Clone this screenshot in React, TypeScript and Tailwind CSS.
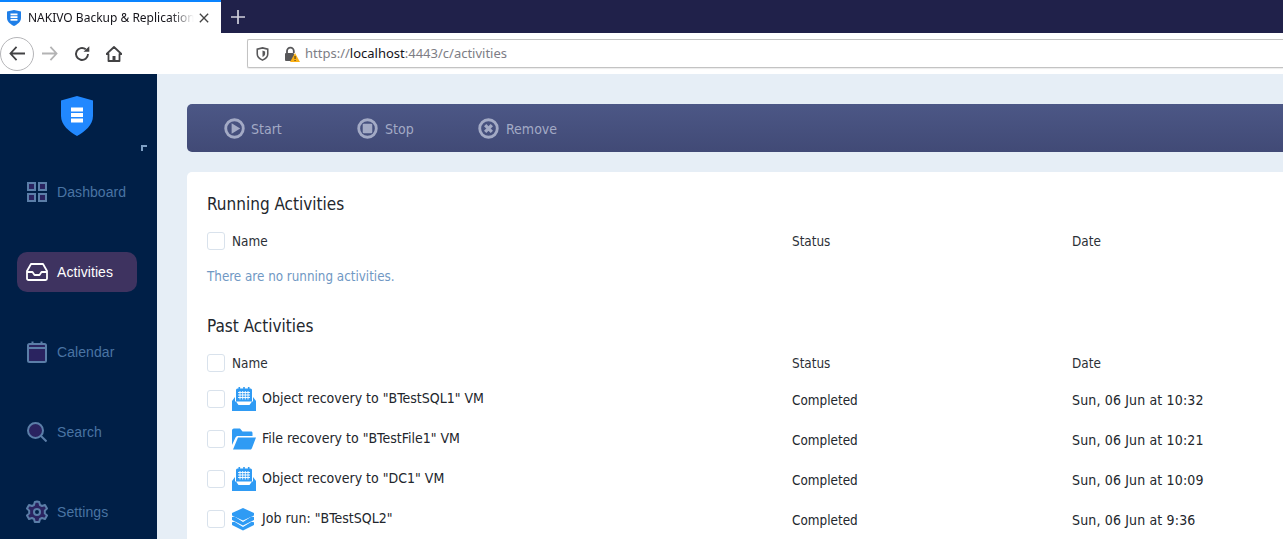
import React from "react";

function Shield({ className }: { className?: string }) {
  return (
    <svg viewBox="0 0 32 40" className={className}>
      <path d="M16 0 L32 4.5 V20 C32 29 24 35.5 16 40 C8 35.5 0 29 0 20 V4.5 Z" fill="#2188ff" />
      <rect x="10" y="11.5" width="12" height="4" fill="#fff" />
      <rect x="10" y="17" width="12" height="4" fill="#fff" />
      <rect x="10" y="22.5" width="12" height="4" fill="#fff" />
    </svg>
  );
}

function TaskIcon() {
  return (
    <svg viewBox="0 0 24 24" className="w-6 h-6 shrink-0">
      <rect x="4" y="1.5" width="16" height="15" rx="1.5" fill="#2f9bf4" />
      <rect x="6.5" y="0" width="1.6" height="3" fill="#2f9bf4" />
      <rect x="11.2" y="0" width="1.6" height="3" fill="#2f9bf4" />
      <rect x="15.9" y="0" width="1.6" height="3" fill="#2f9bf4" />
      <path d="M6 5.5h12M6 8h12M6 10.5h12M8 4v8.5M10.7 4v8.5M13.3 4v8.5M16 4v8.5" stroke="#fff" strokeWidth="0.9" fill="none" />
      <path d="M0 14 L3 10 V14.5 H21 V10 L24 14 V24 H0 Z" fill="#2f9bf4" />
      <path d="M4 14.5 H20 L17.5 18 H6.5 Z" fill="#fff" />
    </svg>
  );
}

function FolderIcon() {
  return (
    <svg viewBox="0 0 24 24" className="w-6 h-6 shrink-0">
      <path d="M0 3.5 C0 2.5 .7 1.5 2 1.5 H8 L10.5 4.5 H19 C20 4.5 20.5 5.2 20.5 6 V9 H6 C4.8 9 4 9.5 3.4 10.7 L0 18 Z" fill="#2f9bf4" />
      <path d="M6 10.5 H24 L20 21 C19.7 21.8 19.2 22.5 18.5 22.5 H1 Z" fill="#2f9bf4" />
    </svg>
  );
}

function StackIcon() {
  return (
    <svg viewBox="0 0 24 24" className="w-6 h-6 shrink-0">
      <path d="M11 1 L22 6 V8.5 L11 13.5 L0 8.5 V6 Z" fill="#2f9bf4" />
      <path d="M0 10 L2.5 9.6 L11 15 L19.5 9.6 L22 10 V13 L11 18.5 L0 13 Z" fill="#2f9bf4" />
      <path d="M0 15.2 L2.5 14.8 L11 20 L19.5 14.8 L22 15.2 V18 L11 23.5 L0 18 Z" fill="#2f9bf4" />
    </svg>
  );
}

function NavItem({ label, active, icon }: { label: string; active?: boolean; icon: React.ReactNode }) {
  return (
    <div
      className={
        active
          ? "flex items-center h-10 w-[120px] rounded-[10px] bg-[#3e3360] mx-[17px] pl-[9px] gap-[9px] text-white"
          : "flex items-center h-10 w-[120px] mx-[17px] pl-[9px] gap-[9px] text-[#4a74a3]"
      }
    >
      <span className="w-[22px] h-[22px] flex items-center justify-center shrink-0">{icon}</span>
      <span className="text-[14px] tracking-[0.08px] font-['Liberation_Sans',sans-serif]">{label}</span>
    </div>
  );
}

function ActionIcon({ kind }: { kind: "play" | "stop" | "x" }) {
  return (
    <svg viewBox="0 0 22 22" className="w-[21px] h-[21px]">
      <circle cx="11" cy="11" r="9.2" fill="none" stroke="#a3aac5" strokeWidth="3" />
      {kind === "play" && <path d="M8 5.5 L17 11 L8 16.5 Z" fill="#a3aac5" />}
      {kind === "stop" && <rect x="6" y="6" width="10" height="10" rx="1" fill="#a3aac5" />}
      {kind === "x" && <path d="M7.5 7.5 L14.5 14.5 M14.5 7.5 L7.5 14.5" stroke="#a3aac5" strokeWidth="3.4" />}
    </svg>
  );
}

function Check() {
  return <span className="block w-[18px] h-[18px] shrink-0 rounded-[3px] border border-[#d9e2ec] bg-white" />;
}

const rowCols = "grid grid-cols-[585px_280px_1fr] items-center";

function Header({ heightClass }: { heightClass: string }) {
  return (
    <div className={`${rowCols} ${heightClass} text-[13.4px] text-[#2b2f36]`}>
      <div className="flex items-center gap-[7px]">
        <Check />
        <span className="translate-y-[1px]">Name</span>
      </div>
      <span className="translate-y-[1px]">Status</span>
      <span className="translate-y-[1px]">Date</span>
    </div>
  );
}

function Row({ icon, name, date }: { icon: React.ReactNode; name: string; date: string }) {
  return (
    <div className={`${rowCols} h-10 text-[14px] text-[#22262c]`}>
      <div className="flex items-center gap-[7px] -translate-y-[1px]">
        <Check />
        {icon}
        <span className="ml-[-1px] -translate-y-[1px]">{name}</span>
      </div>
      <span className="text-[13.4px] translate-y-[1px]">Completed</span>
      <span className="tracking-[0.15px]">{date}</span>
    </div>
  );
}

export default function App() {
  return (
    <div className="w-[1283px] h-[539px] overflow-hidden flex flex-col bg-white font-['Noto_Sans',sans-serif]">
      {/* tab bar */}
      <div className="h-[33px] shrink-0 flex bg-[#20214a]">
        <div className="w-[221px] bg-white border-t-2 border-[#0a84ff] flex items-center pl-[7px] pr-[2px]">
          <svg viewBox="0 0 14 16" className="w-[14px] h-4 shrink-0">
            <path d="M7 0 L14 1.5 V8 C14 12 10 14.5 7 16 C4 14.5 0 12 0 8 V1.5 Z" fill="#1f7fe8" />
            <rect x="3.5" y="3.5" width="7" height="1.8" fill="#fff" />
            <rect x="3.5" y="6.2" width="7" height="1.8" fill="#fff" />
            <rect x="3.5" y="8.9" width="7" height="1.8" fill="#fff" />
          </svg>
          <span className="ml-[7px] text-[12px] text-[#15141a] whitespace-nowrap overflow-hidden w-[166px] [mask-image:linear-gradient(to_right,black_86%,transparent)]">
            NAKIVO Backup &amp; Replication v
          </span>
          <svg viewBox="0 0 12 12" className="w-[10px] h-[10px] ml-[5px] shrink-0">
            <path d="M1 1 L11 11 M11 1 L1 11" stroke="#444" strokeWidth="1.6" />
          </svg>
        </div>
        <div className="w-[34px] flex items-center justify-center">
          <svg viewBox="0 0 14 14" className="w-[14px] h-[14px]">
            <path d="M7 0 V14 M0 7 H14" stroke="#d0d0dc" strokeWidth="1.7" />
          </svg>
        </div>
      </div>
      {/* nav bar */}
      <div className="h-[41px] shrink-0 flex items-center bg-white">
        <div className="w-[34px] h-[34px] rounded-full border border-[#b5b5b8] flex items-center justify-center">
          <svg viewBox="0 0 18 16" className="w-[17px] h-[15px]">
            <path d="M8 1 L1.5 8 L8 15 M2 8 H17" stroke="#424244" strokeWidth="1.9" fill="none" />
          </svg>
        </div>
        <svg viewBox="0 0 18 16" className="w-[17px] h-[15px] ml-[7px]">
          <path d="M10 1 L16.5 8 L10 15 M16 8 H1" stroke="#b3b3b4" strokeWidth="1.9" fill="none" />
        </svg>
        <svg viewBox="0 0 16 16" className="w-[16px] h-[16px] ml-[16px]">
          <path d="M14 8 A6 6 0 1 1 11.8 3.3" stroke="#424244" strokeWidth="1.9" fill="none" />
          <path d="M9.5 5.8 H15.3 V0.2 Z" fill="#424244" />
        </svg>
        <svg viewBox="0 0 16 16" className="w-[16px] h-[16px] ml-[16px]">
          <path d="M8 1 L15.5 8 L13.5 8 V15 H2.5 V8 L.5 8 Z" fill="none" stroke="#424244" strokeWidth="1.8" strokeLinejoin="round" />
          <rect x="6.5" y="10" width="3" height="5" fill="#424244" />
        </svg>
        <div className="ml-[125px] flex-1 h-[29px] border border-[#c3c3c3] border-r-0 rounded-l-[2px] flex items-center pl-[8px] shadow-[0_1px_1px_rgba(0,0,0,0.08)]">
          <svg viewBox="0 0 14 16" className="w-[13px] h-[14px]">
            <path d="M7 1 L13 2.5 V8 C13 11.5 10 13.8 7 15 C4 13.8 1 11.5 1 8 V2.5 Z" fill="none" stroke="#58585a" strokeWidth="1.8" />
            <path d="M7 4 L10 5 V8 C10 9.5 8.5 11 7 11.5 Z" fill="#58585a" />
          </svg>
          <svg viewBox="0 0 16 16" className="w-4 h-4 ml-[15px]">
            <path d="M3 7 V5 A3.4 3.4 0 0 1 9.8 5 V7" fill="none" stroke="#58585a" strokeWidth="1.8" />
            <rect x="1" y="7" width="9" height="8" rx="1" fill="#58585a" />
            <path d="M11 7 L16 16 H6 Z" fill="#fbb014" />
            <rect x="10.6" y="10" width="0.9" height="3" fill="#222" />
            <rect x="10.6" y="14" width="0.9" height="1" fill="#222" />
          </svg>
          <span className="ml-[5px] text-[13px] text-[#7d7d85] whitespace-nowrap">
            https://<span className="text-[#15141a]">localhost</span>:4443/c/activities
          </span>
        </div>
      </div>
      {/* page */}
      <div className="flex-1 min-h-0 flex">
        <aside className="w-[157px] shrink-0 bg-[#001f47] flex flex-col">
          <div className="h-[78px] relative shrink-0">
            <Shield className="absolute left-[61px] top-[22px] w-8 h-10" />
            <span className="absolute left-[141px] top-[71px] w-[6px] h-[6px] border-l-2 border-t-2 border-[#7e9fc4]" />
          </div>
          <div className="flex flex-col gap-10 mt-[20px]">
            <NavItem
              label="Dashboard"
              icon={
                <svg viewBox="0 0 20 20" className="w-5 h-5">
                  {[[1, 1], [12, 1], [1, 12], [12, 12]].map(([x, y]) => (
                    <rect key={`${x}-${y}`} x={x} y={y} width="7" height="7" fill="#2a2360" stroke="#5b7ea8" strokeWidth="2" />
                  ))}
                </svg>
              }
            />
            <NavItem
              active
              label="Activities"
              icon={
                <svg viewBox="0 0 22 18" className="w-[22px] h-[18px]">
                  <path d="M5 1 H17 L21 8 V15.5 C21 16.3 20.3 17 19.5 17 H2.5 C1.7 17 1 16.3 1 15.5 V8 Z M1 9 H6.5 L8.5 12 H13.5 L15.5 9 H21" fill="none" stroke="#fff" strokeWidth="1.8" strokeLinejoin="round" />
                </svg>
              }
            />
            <NavItem
              label="Calendar"
              icon={
                <svg viewBox="0 0 20 22" className="w-5 h-[22px]">
                  <rect x="1" y="3" width="18" height="18" rx="1.5" fill="#2a2360" stroke="#5b7ea8" strokeWidth="2" />
                  <path d="M1 7 H19 M5.5 0.5 V4 M14.5 0.5 V4" stroke="#5b7ea8" strokeWidth="2" />
                </svg>
              }
            />
            <NavItem
              label="Search"
              icon={
                <svg viewBox="0 0 20 20" className="w-5 h-5">
                  <circle cx="8.5" cy="8.5" r="7.5" fill="#2a2360" stroke="#5b7ea8" strokeWidth="2" />
                  <path d="M14 14 L19.5 19.5" stroke="#5b7ea8" strokeWidth="2" />
                </svg>
              }
            />
            <NavItem
              label="Settings"
              icon={
                <svg viewBox="0 0 24 24" className="w-6 h-6 shrink-0">
                  <path
                    d="M12 1.5 L14.2 2 L15 5 L17 6 L20 5 L22 8.5 L19.8 10.6 V13.4 L22 15.5 L20 19 L17 18 L15 19 L14.2 22 H9.8 L9 19 L7 18 L4 19 L2 15.5 L4.2 13.4 V10.6 L2 8.5 L4 5 L7 6 L9 5 L9.8 2 Z"
                    fill="#2a2360"
                    stroke="#5b7ea8"
                    strokeWidth="2"
                    strokeLinejoin="round"
                  />
                  <circle cx="12" cy="12" r="3" fill="#001f47" stroke="#5b7ea8" strokeWidth="2" />
                </svg>
              }
            />
          </div>
        </aside>
        <main className="flex-1 min-w-0 bg-[#e6eef6] pl-[30px] pt-[30px] font-['DejaVu_Sans_Condensed','DejaVu_Sans',sans-serif]">
          <div className="h-12 rounded-l-[5px] bg-gradient-to-b from-[#4c5786] to-[#414a76] flex items-center text-[14px] text-[#a3aac5] pl-[37px]">
            <div className="flex items-center gap-[6px] w-[133px]">
              <ActionIcon kind="play" />
              <span className="translate-y-[1px]">Start</span>
            </div>
            <div className="flex items-center gap-[7px] w-[121px]">
              <ActionIcon kind="stop" />
              <span className="translate-y-[1px]">Stop</span>
            </div>
            <div className="flex items-center gap-[7px]">
              <ActionIcon kind="x" />
              <span className="translate-y-[1px]">Remove</span>
            </div>
          </div>
          <div className="mt-5 bg-white rounded-l-[5px] pl-5 pt-5 h-[400px]">
            <h2 className="text-[17px] leading-6 text-[#23272d]">Running Activities</h2>
            <div className="mt-[6px]">
              <Header heightClass="h-[38px]" />
            </div>
            <p className="text-[13.3px] leading-5 text-[#7098c4] mt-[7px]">There are no running activities.</p>
            <h2 className="text-[17px] leading-6 text-[#23272d] mt-[27px]">Past Activities</h2>
            <div className="mt-[9px]">
              <Header heightClass="h-[33px]" />
              <Row icon={<TaskIcon />} name={'Object recovery to "BTestSQL1" VM'} date="Sun, 06 Jun at 10:32" />
              <Row icon={<FolderIcon />} name={'File recovery to "BTestFile1" VM'} date="Sun, 06 Jun at 10:21" />
              <Row icon={<TaskIcon />} name={'Object recovery to "DC1" VM'} date="Sun, 06 Jun at 10:09" />
              <Row icon={<StackIcon />} name={'Job run: "BTestSQL2"'} date="Sun, 06 Jun at 9:36" />
            </div>
          </div>
        </main>
      </div>
    </div>
  );
}
